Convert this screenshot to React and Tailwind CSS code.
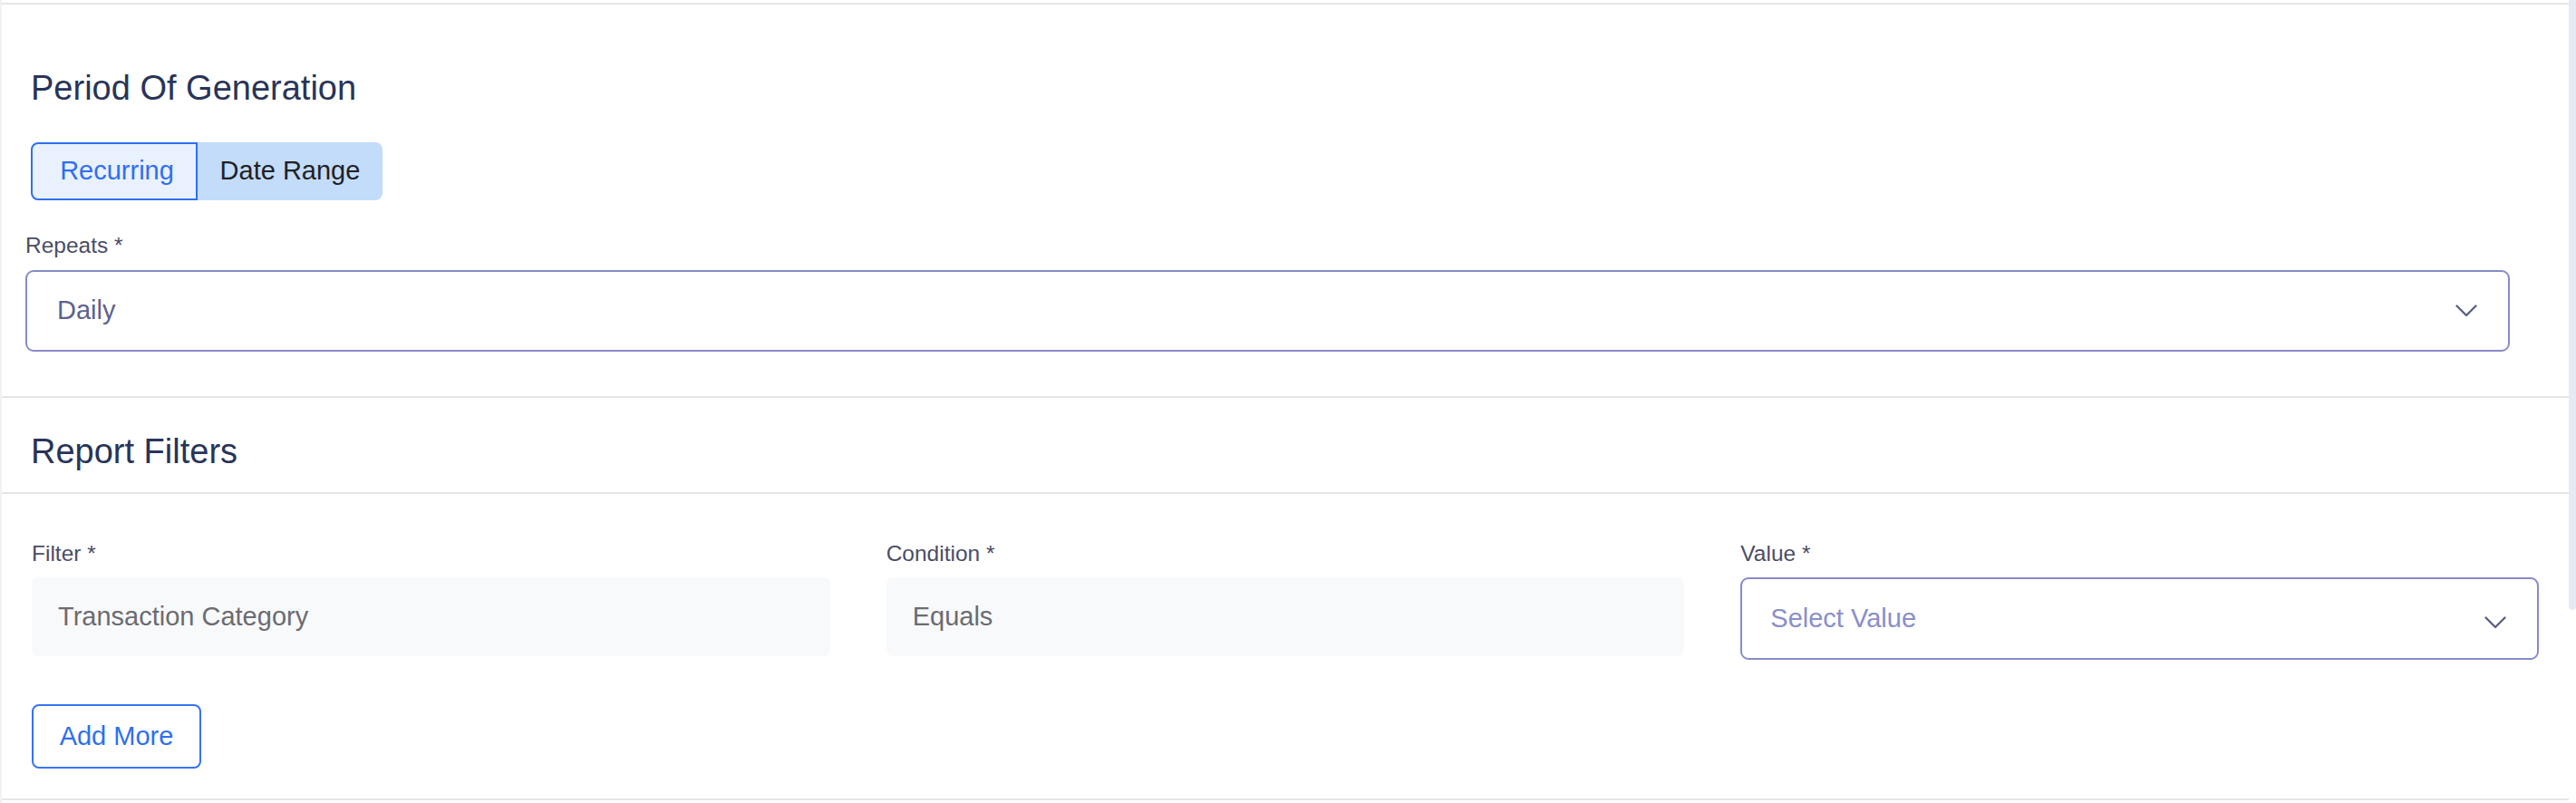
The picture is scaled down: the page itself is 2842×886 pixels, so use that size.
import React from "react";

function Chevron() {
  return (
    <svg width="24" height="14" viewBox="0 0 24 14" fill="none" className="shrink-0">
      <polyline points="1.5,1.5 12,12 22.5,1.5" stroke="#5c6088" strokeWidth="2.4" strokeLinecap="round" strokeLinejoin="round" />
    </svg>
  );
}

function Label({ children }) {
  return <div className="text-[24.5px] leading-[28px] text-[#4a4d67]">{children}</div>;
}

export default function App() {
  return (
    <div className="flex w-[2842px] h-[886px] bg-white font-['Liberation_Sans',Arial,sans-serif]">
      <div className="w-[2px] shrink-0 bg-[#eef2f7]" />
      <div className="flex-1 flex flex-col pt-[3px]">
        {/* Period of generation */}
        <div className="border-t-2 border-[#e6e6e6] pt-[72px] pb-[49px]">
          <div className="pl-[32px]">
            <h2 className="text-[38px] leading-[40px] text-[#283459]">Period Of Generation</h2>
            <div className="mt-[40px] flex h-[64px]">
              <button className="w-[184px] h-full flex items-center justify-center pl-[6px] bg-[#e8f1fd] border-2 border-[#2f6ff1] rounded-l-[8px] text-[29px] text-[#2f6ff1]">
                Recurring
              </button>
              <button className="w-[204px] h-full flex items-center justify-center bg-[#c2dcfa] rounded-r-[8px] text-[29px] text-[#202124]">
                Date Range
              </button>
            </div>
          </div>
          <div className="pl-[26px] mt-[36px]">
            <Label>Repeats *</Label>
            <div className="mt-[13px] w-[2741px] h-[90px] border-2 border-[#878bc8] rounded-[9px] flex items-center justify-between pl-[33px] pr-[34px]">
              <span className="text-[29px] text-[#5d6190]">Daily</span>
              <Chevron />
            </div>
          </div>
        </div>

        {/* Report filters header */}
        <div className="border-t-2 border-[#e6e6e6] pt-[39px] pb-[25px] pl-[32px]">
          <h2 className="text-[38px] leading-[40px] text-[#283459]">Report Filters</h2>
        </div>

        {/* Filters body */}
        <div className="border-t-2 border-b-2 border-[#e6e6e6] pt-[52px] pb-[33px] px-[33px]">
          <div className="grid grid-cols-3 gap-x-[62px] items-start">
            <div>
              <Label>Filter *</Label>
              <div className="mt-[12px] h-[87px] bg-[#f8f9fb] rounded-[7px] flex items-center pl-[29px]">
                <span className="text-[29px] text-[#6b6b71]">Transaction Category</span>
              </div>
            </div>
            <div>
              <Label>Condition *</Label>
              <div className="mt-[12px] h-[87px] bg-[#f8f9fb] rounded-[7px] flex items-center pl-[29px]">
                <span className="text-[29px] text-[#6b6b71]">Equals</span>
              </div>
            </div>
            <div>
              <Label>Value *</Label>
              <div className="mt-[12px] h-[91px] border-2 border-[#878bc8] rounded-[9px] flex items-center justify-between pl-[31px] pr-[34px]">
                <span className="text-[29px] text-[#8a8ecb]">Select Value</span>
                <div className="pt-[8px]">
                  <Chevron />
                </div>
              </div>
            </div>
          </div>
          <button className="mt-[49px] w-[187px] h-[71px] border-2 border-[#3574f0] rounded-[8px] flex items-center justify-center text-[29px] text-[#2f6ff1]">
            Add More
          </button>
        </div>
      </div>
      <div className="w-[8px] shrink-0">
        <div className="h-[673px] bg-[#e3eaf4] rounded-b-[5px]" />
      </div>
    </div>
  );
}
